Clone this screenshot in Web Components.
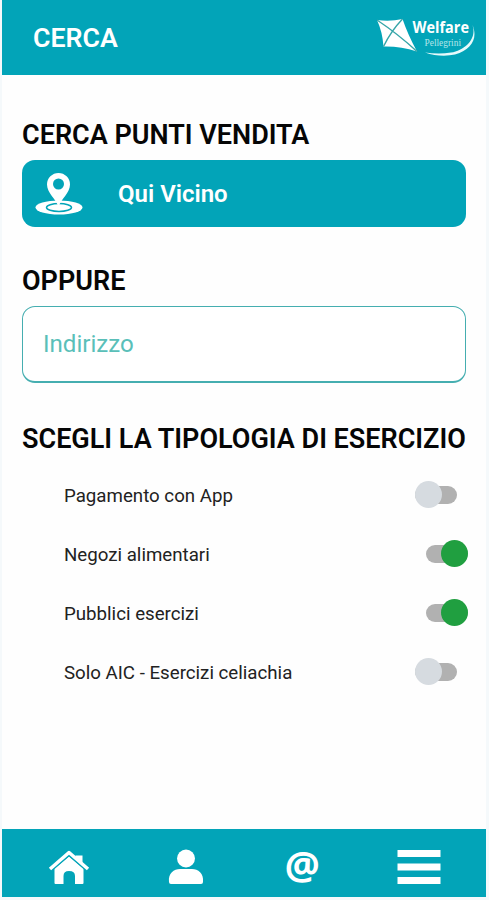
<!DOCTYPE html>
<html lang="it">
<head>
<meta charset="UTF-8">
<meta name="viewport" content="width=device-width, initial-scale=1.0">
<title>Cerca</title>
<style>
  body {
    margin: 0;
    background: #f5f9fb;
    font-family: Roboto, "Liberation Sans", sans-serif;
    --teal: #02a4b8;
  }
</style>
</head>
<body>
<search-screen>
  <app-header slot="header" heading="CERCA"></app-header>
  <section-title>CERCA PUNTI VENDITA</section-title>
  <nearby-button>Qui Vicino</nearby-button>
  <section-title>OPPURE</section-title>
  <address-field>Indirizzo</address-field>
  <section-title>SCEGLI LA TIPOLOGIA DI ESERCIZIO</section-title>
  <filter-list>
    <filter-row>Pagamento con App</filter-row>
    <filter-row checked>Negozi alimentari</filter-row>
    <filter-row checked>Pubblici esercizi</filter-row>
    <filter-row>Solo AIC - Esercizi celiachia</filter-row>
  </filter-list>
  <bottom-nav slot="footer"></bottom-nav>
</search-screen>

<script>
// Small helper: shadow root filled with markup
function render(el, html) {
  el.attachShadow({ mode: 'open' }).innerHTML = html;
}

// Page frame: header, content, footer
class SearchScreen extends HTMLElement {
  connectedCallback() {
    render(this, `
      <style>
        :host {
          display: flex;
          flex-direction: column;
          box-sizing: border-box;
          height: 900px;
          padding: 0 3px 3px 2px;
        }
        main {
          flex: 1;
          display: flex;
          flex-direction: column;
          padding: 45px 20px 0 20px;
          background: #fefefe;
        }
      </style>
      <slot name="header"></slot>
      <main><slot></slot></main>
      <slot name="footer"></slot>
    `);
  }
}

// Kite logo with the brand name
class WelfareLogo extends HTMLElement {
  connectedCallback() {
    render(this, `
      <style>
        :host { display: block; width: 100px; height: 52px; }
        svg { display: block; }
      </style>
      <svg width="100" height="52" viewBox="0 -5 100 52">
        <path d="M0 2 Q13 4 25.500 1 Q31 17 40 33.500 Q23 28 6.500 28.500 Q5.500 14 0 2 Z" fill="#fff"/>
        <path d="M0 2 Q21 16 40 33.500 M25.500 1 Q14 13 6.500 28.500" fill="none" stroke="#35a5a8" stroke-width="1.400"/>
        <path d="M95.500 7 C100 20 89 32 74 34.500 C65 36 56 35.500 48 34.500 C58 38 69 38.500 78 36.500 C95 32 101 20 95.500 7 Z" fill="#e6fafb"/>
        <text x="35.500" y="15" font-family="Open Sans, sans-serif" font-weight="700" font-size="16" fill="#fff" textLength="56.500" lengthAdjust="spacingAndGlyphs">Welfare</text>
        <text x="47.500" y="28" font-family="Liberation Serif, serif" font-size="9.500" fill="#b5e6ea" textLength="36.500" lengthAdjust="spacingAndGlyphs">Pellegrini</text>
      </svg>
    `);
  }
}

class AppHeader extends HTMLElement {
  connectedCallback() {
    render(this, `
      <style>
        :host {
          display: flex;
          justify-content: space-between;
          align-items: center;
          box-sizing: border-box;
          height: 75px;
          padding: 2px 9px 0 31px;
          background: var(--teal);
          color: #fff;
        }
        h1 { margin: 0; font-size: 26.7px; font-weight: 600; line-height: 31px; }
      </style>
      <h1>${this.getAttribute('heading')}</h1>
      <welfare-logo></welfare-logo>
    `);
  }
}

class SectionTitle extends HTMLElement {
  connectedCallback() {
    render(this, `
      <style>
        :host { display: block; margin-bottom: 9px; }
        h2 {
          margin: 0;
          font-size: 27px;
          font-weight: 600;
          line-height: 31px;
          white-space: nowrap;
          color: #060606;
        }
      </style>
      <h2><slot></slot></h2>
    `);
  }
}

class NearbyButton extends HTMLElement {
  connectedCallback() {
    render(this, `
      <style>
        :host { display: block; margin-bottom: 39px; }
        button {
          display: flex;
          align-items: center;
          gap: 35px;
          width: 100%;
          height: 67px;
          padding: 0 13px;
          border: 0;
          border-radius: 13px;
          background: var(--teal);
          color: #fff;
          font: 600 24px Roboto, sans-serif;
        }
      </style>
      <button>
        <svg width="48" height="44" viewBox="0 0 48 44">
          <ellipse cx="24" cy="35.500" rx="23.500" ry="7" fill="#fff"/>
          <ellipse cx="24" cy="35.500" rx="12.500" ry="4" fill="#fff" stroke="#02a4b8" stroke-width="1.500"/>
          <path d="M23.500 35 C21 27 12 21 12 12.500 A11.500 11.500 0 0 1 35 12.500 C35 21 26 27 23.500 35 Z" fill="#fff"/>
          <circle cx="23.500" cy="12" r="5.500" fill="#02a4b8"/>
        </svg>
        <span><slot></slot></span>
      </button>
    `);
  }
}

class AddressField extends HTMLElement {
  connectedCallback() {
    render(this, `
      <style>
        :host {
          display: flex;
          align-items: center;
          box-sizing: border-box;
          height: 77px;
          margin-bottom: 41px;
          padding: 0 20px;
          border: 1.500px solid #45aeb0;
          border-bottom-width: 2px;
          border-radius: 13px;
          background: #fff;
          color: #5abfb9;
          font-size: 24.1px;
        }
      </style>
      <slot></slot>
    `);
  }
}

class FilterList extends HTMLElement {
  connectedCallback() {
    render(this, `
      <style>
        :host { display: flex; flex-direction: column; padding: 1px 0 0 42px; }
      </style>
      <slot></slot>
    `);
  }
}

// Label with a toggle switch
class FilterRow extends HTMLElement {
  connectedCallback() {
    render(this, `
      <style>
        :host {
          display: flex;
          justify-content: space-between;
          align-items: center;
          height: 59px;
          font-size: 18.7px;
          color: #222;
        }
        .label { padding-top: 2px; }
        .track {
          display: flex;
          align-items: center;
          width: 42px;
          height: 18px;
          margin-right: 9px;
          border-radius: 9px;
          background: #b1b1b1;
        }
        .knob {
          width: 27px;
          height: 27px;
          border-radius: 50%;
          background: #d6dbe0;
        }
        :host([checked]) .track { justify-content: flex-end; margin-right: -2px; }
        :host([checked]) .knob { background: #209f40; }
      </style>
      <span class="label"><slot></slot></span>
      <div class="track"><div class="knob"></div></div>
    `);
    this.addEventListener('click', () => this.toggleAttribute('checked'));
  }
}

class BottomNav extends HTMLElement {
  connectedCallback() {
    render(this, `
      <style>
        :host {
          display: grid;
          grid-template-columns: repeat(4, 116.5px);
          justify-content: center;
          align-items: center;
          justify-items: center;
          height: 68px;
          background: var(--teal);
          color: #fff;
        }
        svg { display: block; fill: currentColor; margin-top: 7px; }
        .at { font: 700 39px/38px "Noto Sans", sans-serif; padding-top: 3px; }
      </style>
      <svg width="42" height="36" viewBox="0 0 42 36">
        <path d="M6.500 19.500 L21 7.500 L35.500 19.500 V34 Q35.500 35 34.500 35 H27 V27 Q27 22 21 22 Q15.500 22 15.500 27 V35 H7.500 Q6.500 35 6.500 34 Z"/>
        <path d="M2 20 L21 3.500 L40 20" fill="none" stroke="#02a4b8" stroke-width="6"/>
        <path d="M27.500 6.500 H34.500 V16 L27.500 10 Z"/>
        <path d="M2 20 L21 3.500 L40 20" fill="none" stroke="#fff" stroke-width="3.500" stroke-linejoin="round"/>
      </svg>
      <svg width="36" height="36" viewBox="0 0 36 36">
        <circle cx="18" cy="9.500" r="9"/>
        <path d="M1 33 C0 24 6 20 12 20 H24 C30 20 36 24 35 33 Q35 35 33 35 H3 Q1 35 1 33 Z"/>
      </svg>
      <span class="at">@</span>
      <svg width="44" height="36" viewBox="0 0 44 36">
        <path d="M0.500 1 H43.500 V8 H0.500 Z M0.500 14.500 H43.500 V21.500 H0.500 Z M0.500 28 H43.500 V35 H0.500 Z"/>
      </svg>
    `);
  }
}

customElements.define('search-screen', SearchScreen);
customElements.define('welfare-logo', WelfareLogo);
customElements.define('app-header', AppHeader);
customElements.define('section-title', SectionTitle);
customElements.define('nearby-button', NearbyButton);
customElements.define('address-field', AddressField);
customElements.define('filter-list', FilterList);
customElements.define('filter-row', FilterRow);
customElements.define('bottom-nav', BottomNav);
</script>
</body>
</html>
